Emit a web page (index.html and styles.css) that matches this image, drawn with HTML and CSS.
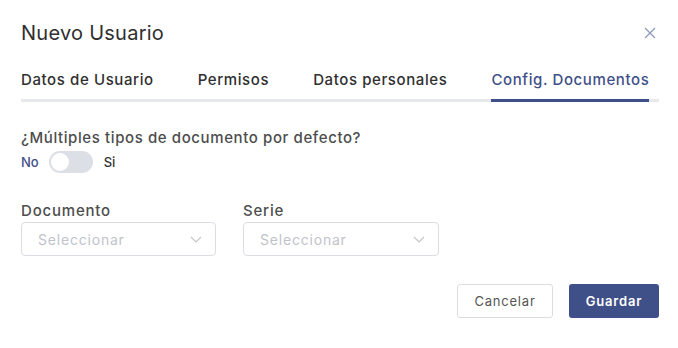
FILE: index.html
```html
<!DOCTYPE html>
<html lang="es">

<head>
    <meta charset="UTF-8">
    <title>Nuevo Usuario</title>
    <link rel="stylesheet" href="styles.css">
</head>

<body>

    <div class="modal">
        <div class="modal-header">
            <h2 class="modal-title">Nuevo Usuario</h2>
            <span class="modal-close">
                <svg width="12" height="12" viewBox="0 0 12 12">
                    <path d="M1 1 L11 11 M11 1 L1 11" stroke="#8e99bb" stroke-width="1.3" fill="none" />
                </svg>
            </span>
        </div>

        <div class="tabs">
            <div class="tab">Datos de Usuario</div>
            <div class="tab">Permisos</div>
            <div class="tab">Datos personales</div>
            <div class="tab active">Config. Documentos</div>
        </div>

        <div class="question">¿Múltiples tipos de documento por defecto?</div>
        <div class="switch-row">
            <span class="switch-no">No</span>
            <span class="switch"><span class="switch-knob"></span></span>
            <span class="switch-si">Si</span>
        </div>

        <div class="fields">
            <div class="field doc">
                <label>Documento</label>
                <div class="select">
                    <span>Seleccionar</span>
                    <svg width="12" height="7" viewBox="0 0 12 7">
                        <path d="M1 1 L6 6 L11 1" stroke="#c3c6ce" stroke-width="1.2" fill="none" />
                    </svg>
                </div>
            </div>
            <div class="field serie">
                <label>Serie</label>
                <div class="select">
                    <span>Seleccionar</span>
                    <svg width="12" height="7" viewBox="0 0 12 7">
                        <path d="M1 1 L6 6 L11 1" stroke="#c3c6ce" stroke-width="1.2" fill="none" />
                    </svg>
                </div>
            </div>
        </div>

        <div class="modal-footer">
            <button class="btn-cancel">Cancelar</button>
            <button class="btn-save">Guardar</button>
        </div>
    </div>

</body>

</html>
```
FILE: styles.css
```css
body {
    margin: 0;
    background: #fff;
    font-family: "Inter", "Noto Sans", sans-serif;
    color: #333;
}

.modal {
    padding: 20px 19px 0 21px;
}

.modal-header {
    display: flex;
    justify-content: space-between;
    align-items: center;
    height: 26px;
}

.modal-title {
    margin: 0;
    font-size: 20px;
    font-weight: 400;
    line-height: 26px;
    letter-spacing: 0.25px;
    color: #2f2f2f;
}

.modal-close {
    display: flex;
    margin-right: 3px;
}

.tabs {
    display: flex;
    gap: 44px;
    margin-top: 24px;
    border-bottom: 3px solid #e6e8ec;
}

.tab {
    font-size: 15px;
    line-height: 20px;
    letter-spacing: 0.6px;
    padding-bottom: 9px;
    margin-bottom: -3px;
    border-bottom: 3px solid transparent;
    color: #2f2f2f;
    font-weight: 500;
}

.tab.active {
    color: #3f4f88;
    border-bottom-color: #3f4f88;
}

.question {
    margin-top: 26px;
    font-size: 15px;
    line-height: 20px;
    letter-spacing: 0.6px;
    color: #4d4d4d;
    font-weight: 500;
}

.switch-row {
    display: flex;
    align-items: center;
    height: 24px;
    margin-top: 2px;
    font-size: 13px;
    font-weight: 500;
}

.switch-no {
    color: #3f4f88;
}

.switch {
    display: flex;
    align-items: center;
    width: 44px;
    height: 22px;
    margin: 0 11px 0 10px;
    border-radius: 11px;
    background: #dcdfe6;
    padding: 0 2px;
    box-sizing: border-box;
}

.switch-knob {
    width: 18px;
    height: 18px;
    border-radius: 50%;
    background: #fff;
}

.switch-si {
    color: #333;
}

.fields {
    display: flex;
    gap: 27px;
    margin-top: 27px;
}

.field label {
    display: block;
    font-size: 15px;
    line-height: 20px;
    letter-spacing: 0.8px;
    color: #4d4d4d;
    font-weight: 500;
    margin-bottom: 1px;
}

.field.doc .select {
    width: 195px;
}

.field.serie .select {
    width: 196px;
}

.select {
    display: flex;
    justify-content: space-between;
    align-items: center;
    height: 34px;
    box-sizing: border-box;
    border: 1px solid #dcdde3;
    border-radius: 4px;
    padding: 0 13px 0 16px;
    font-size: 14px;
    letter-spacing: 0.8px;
    color: #c0c3cb;
}

.modal-footer {
    display: flex;
    justify-content: flex-end;
    gap: 16px;
    margin-top: 28px;
}

.modal-footer button {
    height: 34px;
    border-radius: 3px;
    font-family: inherit;
    font-size: 13px;
    letter-spacing: 0.8px;
    cursor: pointer;
}

.btn-cancel {
    width: 96px;
    background: #fff;
    border: 1px solid #dcdde3;
    color: #555;
}

.btn-save {
    width: 90px;
    background: #3f4f88;
    border: none;
    color: #fff;
    font-weight: 600;
}
```
